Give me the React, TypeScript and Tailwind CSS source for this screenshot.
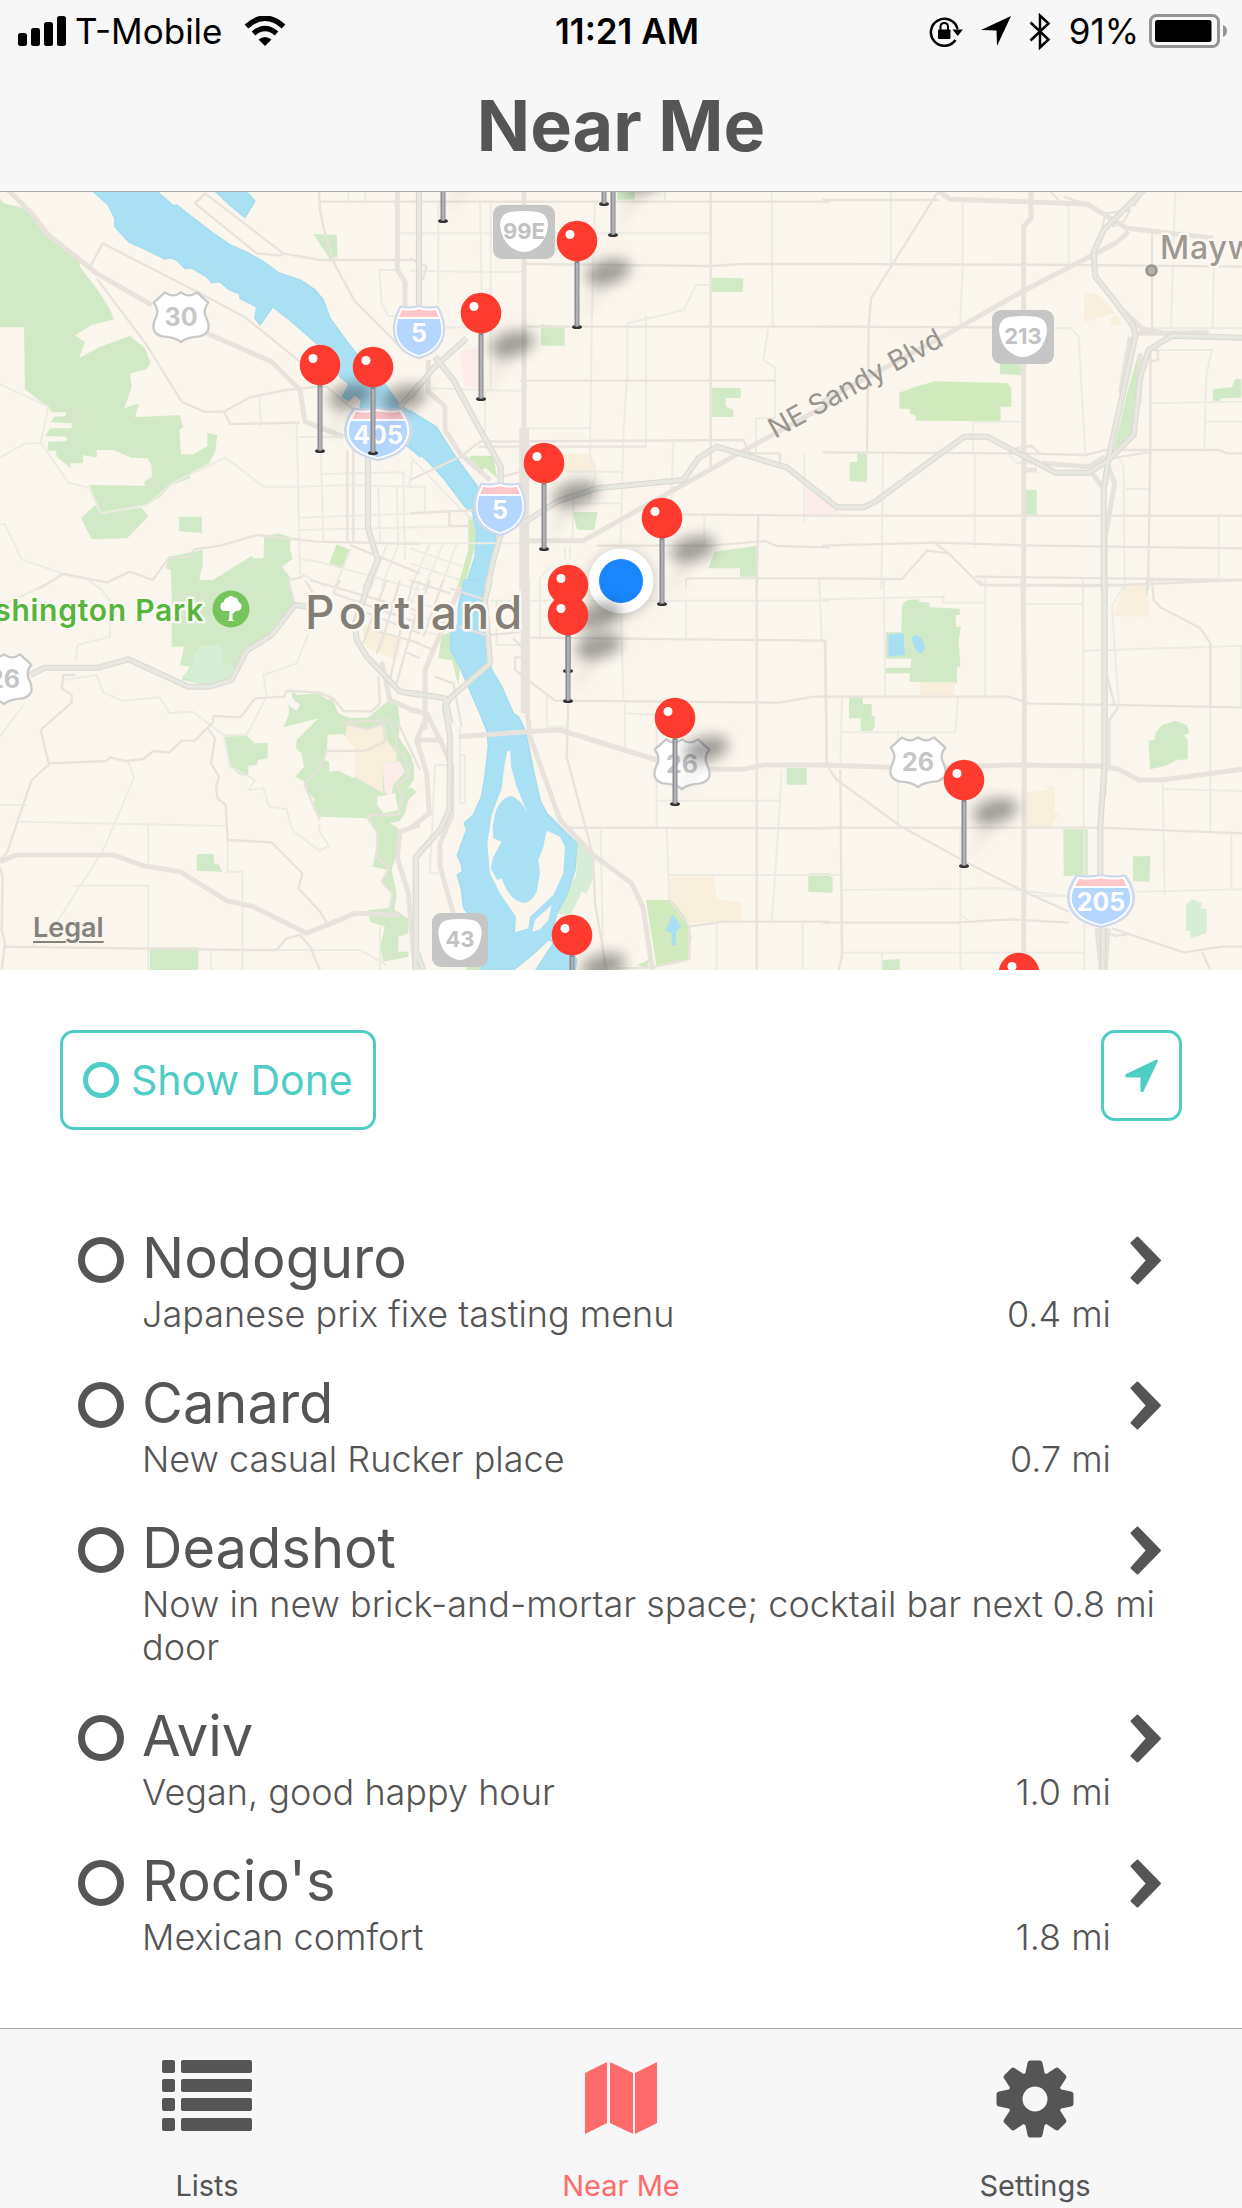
import React, { useState } from 'react';

interface Place {
  name: string;
  note: string;
  distance: string;
}

interface Sheet {
  x: number;
  y: number;
  parks: string;
  golf: string;
  paleParks: string;
  campus: string;
  hospital: string;
  water: string;
  land: string;
  ponds: string;
  lanes: string;
  streets: string;
  avenues: string;
  freeways: string;
}

const PLACES: Place[] = [
  { name: 'Nodoguro', note: 'Japanese prix fixe tasting menu', distance: '0.4 mi' },
  { name: 'Canard', note: 'New casual Rucker place', distance: '0.7 mi' },
  { name: 'Deadshot', note: 'Now in new brick-and-mortar space; cocktail bar next door', distance: '0.8 mi' },
  { name: 'Aviv', note: 'Vegan, good happy hour', distance: '1.0 mi' },
  { name: "Rocio's", note: 'Mexican comfort', distance: '1.8 mi' },
];

// Map geometry, split in six sheets. Each sheet uses units of a third of a map unit.
const SHEETS: Sheet[] = [
  {
    x: 0,
    y: 190,
    parks:
      'M0 25L10 40L75 55L120 105L150 145L232 192L240 230L300 310L325 350L343 388L275 405L225 436L255 457L237 505L300 470L390 438L435 475L452 518L440 538L390 550L395 590L385 620L373 655L417 640L405 682L540 675L549 712L538 720L543 793H580L622 768V728L652 735L645 785L628 820L570 850V865L515 885L480 920L440 945L303 970L290 940L268 885L438 887L432 875L455 860V828L443 805L395 803L340 780H290V803L250 795L248 820H212V835L170 800L168 782H142L145 755L200 753V740L135 738L150 715H215V700L152 697L163 680L198 678V667H155L143 650L75 598L72 412H0Z M243 985L285 945L303 970L425 953L445 978L382 1045L275 1048Z M537 980H606V1029L537 1024Z M497 1135L505 1100L608 1080V1125L595 1180L610 1187L755 1098L760 1105H790L793 1038L835 1030L872 1042L870 1075L878 1107L845 1130L870 1160V1200H515L512 1140Z M940 132L1010 135L1013 200L990 208Z',
    golf: 'M1010 1063L1052 1080L1030 1133L988 1120Z',
    paleParks: '',
    campus: '',
    hospital: '',
    water:
      'M275 0L325 45L345 85V110L388 157L430 175L495 207L510 203L530 210L555 235L575 233L620 260L635 277L660 275L685 297L720 312V325L770 350L765 385L780 404L818 350L870 390L950 460L1020 560L1048 582L1028 620L1045 632L1065 612L1085 632L1080 650L1260 800V690L1195 640L1160 590L1060 480L1030 440L990 385L970 330L945 300L900 270L835 248L790 215L740 187L690 165L640 130L570 77L530 45L520 48L465 0Z M642 0H735L764 33L735 82L690 45Z',
    land: '',
    ponds: '',
    lanes:
      'M0 803L75 760H122 M0 1003H15L65 1108L190 1152 M303 970L440 945L520 878L630 825L677 803L790 890H900L1030 885L1260 890 M778 620L783 710 M890 700L900 1150L980 1190 M893 741H1030 M962 760L970 1055 M1250 0V340 M1200 130H1250 M1210 240H1138L1145 340L1165 378H1200 M965 852L1210 847L1215 1110 M893 983L1260 970 M893 1020L1260 1012 M905 1108L955 1115L1100 1155L1260 1200 M1053 1075L1000 1200 M1135 885L1140 1060 M1190 885L1195 1060 M1238 810L1228 885 M1160 1065L1110 1200 M1195 1065L1145 1190 M1045 0V35 M1096 0V35 M0 583L145 650L122 758L205 878L268 893L303 970',
    streets:
      'M110 1200L190 1152L320 1177L390 1145L458 1170L507 1103L565 1102L585 1078L665 1066L770 1035L950 1055L1260 1062 M290 265L440 465L545 635L612 665H672L750 622L860 600L935 592L980 590L1085 680 M672 665L690 702L900 698 M268 235L308 160L600 310L735 382L900 515 M585 40L615 10L850 190L840 197L770 190Z M850 190L960 210H1260 M957 0L960 60L970 110L1000 215L1065 335L1200 470 M962 35H1250 M1042 780V1060 M1060 780V1060 M1050 1065L1260 1150 M870 1170L910 1160',
    avenues:
      'M25 0L95 70L140 130L290 250L455 345 M620 430L815 515L885 585L900 600L915 695L1030 740 M1192 0V240L1215 275V350',
    freeways: 'M1104 800V1015L1133 1110L1095 1200 M1260 580L1200 650',
  },
  {
    x: 410,
    y: 190,
    parks:
      'M905 263L1000 265L998 306H905Z M393 403L464 410V467H393Z M905 593L992 594V624H947V650L970 660V681H905Z M487 967L563 966L553 1020L502 1019Z M915 1085L1040 1067V1160H990V1135H895Z M622 0H674V28L622 30Z',
    golf: 'M170 820L182 797H250L262 865L225 832L210 850Z M175 975L190 985L200 1050L160 1200H140L175 1080Z',
    paleParks: '',
    campus: 'M460 792H540L563 835L555 845H460Z',
    hospital: 'M150 485L210 470V590H163Z M1188 890L1260 945V973H1188Z',
    water:
      'M0 765L60 820L105 870L150 930L165 950L188 965L200 1030L195 1100L163 1200H240L258 1035L235 940L195 880L140 805L80 712L0 662Z',
    land: '',
    ponds: '',
    lanes:
      'M85 35V340 M210 35L215 310 M242 35V600 M0 130H900 M555 35L545 410L540 800L558 850L535 935 M1085 0L1088 410 M0 242L340 247 M650 570L640 740L632 1060 M652 570V400L822 360L858 285H900 M708 375V770 M1075 415L1060 510L1095 533V685H1038V790 M85 415L250 405 M350 715H540 M60 595L335 603 M225 600V760 M470 845H635 M485 940H635 M790 755L783 975 M883 977V1060 M1183 790V1000 M0 890H45V965 M0 1010H115 M0 1060H340 M465 1070V1110 M480 1070V1110 M0 800L185 990 M828 1165V1200 M1228 1165V1200 M390 1200V1165L420 1130 M765 0V35 M0 1075L160 1130 M0 1120L150 1170 M60 1060L0 1200 M100 1060L40 1200 M140 1060L90 1200 M490 900L488 1060',
    streets:
      'M0 35H1260 M345 222L905 228L1000 222H1260 M902 0V840 M350 410H1260 M330 572H1095 M205 770H708 M145 805L210 755L1000 750 M800 973L1260 977 M1045 977L1040 1200 M560 1067H900L1065 1053L1100 1068L1260 1072 M830 1165H1260 M0 970L190 960 M118 965V1008H180 M0 870L140 805 M1000 750L1020 790H1110V830 M0 205L50 230L38 270 M280 860L350 840',
    avenues:
      'M342 0V1200 M335 715V1200 M350 715V1200 M330 1052H520L1050 755L1260 640 M55 510V605L105 650V720L150 790L240 870',
    freeways:
      'M27 0V345 M75 500L130 570L200 700L272 830V880 M0 620L75 530L170 445 M340 1000L440 935L560 895L820 870L865 805L920 770L1130 832L1260 935 M272 1035L250 1110L230 1200',
  },
  {
    x: 822,
    y: 190,
    parks:
      'M534 520H598V556L534 552Z M106 790H135V877L83 873V816H106Z M609 900H644V974H609Z M950 490L960 520L945 590L935 735L875 780L920 590Z M1173 597L1230 592L1240 567H1258V623L1195 625V634H1173Z',
    golf: 'M232 608L280 590L340 574L555 579L568 592V650H536V694L282 692L280 675L265 672L262 656H232Z',
    paleParks: '',
    campus: 'M788 308L830 315L880 370L785 397Z M865 385L885 375L900 405L868 410Z M905 1187H973V1200H903Z',
    hospital: 'M0 935L62 973H0Z',
    water: '',
    land: '',
    ponds: '',
    lanes:
      'M207 0V222 M422 38V222L415 400 M740 45V220 M1060 0L1047 412 M1175 235L1172 412 M697 415H745L770 440L790 795 M183 790L178 1200 M458 790V1075 M453 790V695H598 M985 640L1260 635 M1170 480L1153 555L1147 775 M985 480H1170 M1147 695H1260 M912 897H985 M890 805L905 830L908 1200 M1190 977V1165 M963 415H1260 M560 790L585 820H640 M490 1165V1200 M783 1165V1200',
    streets:
      'M0 30H350 M345 10L147 325L140 410L135 785 M0 222L760 225L1260 230 M0 410L510 412 M990 130V412 M0 787L600 790L790 795L850 780H1190L1215 790H1260 M0 977H1260 M0 1067L340 1058L600 1066L1260 1075 M0 1165L240 1167L315 1082L380 1090L475 1185H900 M340 1060L380 1090 M460 1160L1260 1170 M985 480V790L978 1200 M580 775L628 768L655 790 M725 20L800 45 M680 0L710 30 M840 120L850 70L925 60L905 95L870 110 M985 790V765 M870 805L990 785 M985 480H1008V510L985 515',
    avenues:
      'M345 0L385 28L600 35L795 42L915 115L1175 145 M627 0V85L605 110V1200 M0 635L380 430L600 305L880 160L920 125 M605 840H645 M945 430L1160 428 M880 340L960 415L1050 435 M925 440L895 610 M955 490L950 640 M855 820L878 880L850 1040V1200 M800 835L840 890 M660 820L800 830L850 800',
    freeways:
      'M965 0L845 120L815 185L820 260L880 335L935 410L940 440L905 600L860 800L845 900V1200 M1260 443L1050 437L980 480L955 560L935 735L855 815L800 848H700L600 795L495 740H428L350 795L160 935L125 952H45L0 915 M960 0L930 45',
  },
  {
    x: 0,
    y: 580,
    parks:
      'M515 0H865L880 50V80L800 170L740 215L690 300L620 315L545 300L570 260L540 255L552 200H515Z M672 470L740 467L765 490L803 488V535L775 540L770 555L745 557V587L720 585L690 560Z M875 328L890 345L960 340L980 358H998L1015 400L1050 415L1105 412L1165 362L1192 365L1200 430L1195 470L1235 530L1243 590L1225 625L1247 635L1225 660L1215 700L1200 723L1170 730L1195 745L1190 820L1175 870L1190 940L1183 990L1225 1015V1060L1195 1070V1115H1225V1130L1150 1145L1140 1100L1155 1040L1110 1025L1105 990L1165 985L1175 945L1145 905L1165 870L1118 860L1130 800V760L1100 715L960 710L940 690L943 655L925 640L915 605L885 590L912 560L905 520L888 505L890 480L955 415L850 442L868 400L865 375L890 392L900 375L877 355Z M590 822H642V850L655 852L667 875L590 872Z M450 1103L595 1102V1170H450Z',
    golf: '',
    paleParks: 'M545 290L575 265L580 220L610 195H665L670 245L707 262L690 300L600 312Z',
    campus:
      'M1040 435L1100 448L1155 432L1160 480L1190 520V545L1145 550L1150 640L1062 590V500L1035 475Z M1085 130L1205 180L1190 242L1100 200Z',
    hospital: 'M1145 550L1200 545L1215 575L1180 615L1175 645L1155 640Z',
    water: '',
    land: 'M983 465L1030 462L1062 500V595L1015 572L988 575V545L972 540L980 515Z M1132 650L1185 640L1195 690L1150 700L1132 675Z',
    ponds: '',
    lanes:
      'M0 470L70 375 M0 675H80 M60 725L680 738 M385 543L402 593L310 810L175 1020L95 1100 M445 735V850 M225 917H445V1170 M683 780V875H727V1170 M190 300L290 285L310 338L365 362L480 352L508 400L578 395L670 465H740L800 350L790 285L890 250L925 160 M672 470L690 560L765 600L745 630L790 625L808 680L860 688L877 750L958 812L988 798L958 755V730 M730 1110H1080L1160 1155 M633 1110V1170 M265 0L300 25L330 60V170L232 195L228 240 M0 80L165 0 M1140 1040V1170',
    streets:
      'M150 550L320 543L330 532L375 543L430 537L460 513L508 518L545 482H585L640 425V408L722 412L765 355L852 350L860 332L960 338L1000 355L1030 393L1115 394L1140 370L1135 290 M0 840L20 820L95 600L147 553L122 450L215 368V345L185 325L190 285H225 M620 440L645 475L633 550L657 590L648 620L653 655L677 675L683 780L815 787L907 880L895 925L960 995L985 1035 M912 612L958 570L980 513L1097 512L1155 485L1150 430L1100 448L1030 427L1170 420L1190 480L1185 512L1210 520L1227 590L1190 615L1207 650L1197 705H1103L1133 760L1130 830L1168 865L1145 905L1177 940L1170 1000 M10 1100L730 1110H830L860 1075L900 1065L930 1100L960 1170 M912 612L960 720 M1195 430L1260 570 M0 860L8 890L5 1050L15 1090L5 1170 M865 0L885 75 M915 0L940 40 M930 0L1260 95 M1000 40L1260 130 M1090 95L1260 160 M1120 150L1260 190 M1020 0L1000 40 M1160 0L1110 130L1090 190 M1200 0L1150 170L1130 220 M1240 0L1200 160L1170 300 M1260 60L1215 220L1190 310 M1215 215L1260 235',
    avenues:
      'M0 845L50 825H340L430 857L540 875L680 962L760 980L920 1060L1065 1000L1200 1005 M1260 735L1200 755L1192 835L1225 940L1245 1170 M1145 245L1170 360L1225 385L1260 395',
    freeways:
      'M90 285L135 263H295L385 238L565 320H630L695 300L740 212L815 165L885 75L920 80 M1110 0L1065 130L1070 180L1100 230L1200 335L1260 345 M1260 820L1247 835V1170',
  },
  {
    x: 410,
    y: 580,
    parks:
      'M95 165L125 155L122 210L150 260L145 315L125 240L85 235Z M1130 563H1190V614H1130Z M1195 880H1260V938L1195 935Z M0 530L12 555V600L0 615Z M0 620L20 635L0 655Z M680 1155L715 1140V1165Z M170 1160H215V1170H170Z',
    golf: 'M708 960H780L815 975L845 1070L833 1140L740 1160Z',
    paleParks: 'M495 765L550 830L552 890L530 940L515 935L480 1010L440 1000L500 880Z',
    campus: 'M780 890H912L920 960L995 965V1020L840 1030L778 950Z',
    hospital: '',
    water:
      'M163 0L145 80V130L122 160V210L150 260L175 320L210 400L232 455L235 500L225 590L215 650L190 705L163 730L170 750L155 790L142 825L155 855L157 875L142 885L155 930L160 980L180 1010V1100L215 1150V1170H310L360 1130L420 1075L430 1090L378 1170H495L500 1140L490 1120L420 1080L440 1000L470 945L495 870L500 790L455 745L410 700L390 660L370 570L350 470L340 440L325 410L310 400L275 320L245 270L225 200L228 60L240 0Z',
    land: 'M292 512L283 560L275 625L245 705L232 790L240 880L270 940L318 1010L315 1057L355 1045L360 1010L430 945L460 880L465 800L450 770L410 752L400 800L385 840L390 880L380 935Q360 975 335 968Q295 955 275 895L262 900L242 865L250 830L275 785L250 775L248 740L258 690Q275 655 300 648Q330 652 353 702L320 620L303 560L301 514Z M367 1055L375 1020L425 975L415 1020L390 1048Z',
    ponds: 'M790 1003L812 1040L798 1055V1095H785V1060L765 1050Z',
    lanes:
      'M240 62H415 M540 62H1260 M828 60V175 M1228 0L1235 180 M633 100L640 362 M645 370V510 M645 400L740 405V740 M740 662H1115 M1115 570L1105 745L1085 1030 M572 750L580 1170 M770 748L778 960 M778 885H1260 M920 1030V1170 M1178 1030V1170 M410 350V440H470 M390 0V180 M60 880V820 M75 555H110 M75 555L60 880H90 M0 60L110 95 M0 100L100 130 M0 140L80 165 M30 0L0 80 M260 60V195H345 M150 440V670H165V525H150',
    streets:
      'M0 0L120 40 M0 180L70 210 M60 0L0 160 M100 0L40 170 M240 165L345 155 M350 173L1245 182L1250 550 M150 140L240 170 M1040 0V1170 M340 232H315V270L435 362L1110 368L1210 350H1260 M475 370L470 530L550 830L555 970L590 1170 M480 743L1260 745 M778 960L838 1040V1140 M838 1040L940 1025H1260 M620 1165L720 1163L830 1140 M120 25L230 60 M75 290L130 310L155 440 M310 175L345 210',
    avenues:
      'M340 0V400 M352 0V400L360 470L450 720L550 825L665 910L700 985L727 1170 M145 470L350 455L450 450L740 540 M900 568H1000L1060 555H1260 M45 450V270L150 20 M0 390L50 400L100 500L125 560V710L90 790V860L130 1000 M20 480H100 M45 420L20 480L50 580L58 700L0 745',
    freeways:
      'M240 0L225 60L240 250L120 355L105 380L120 470L118 690L90 750L18 830V1110L40 1170 M0 338L105 355L122 430',
  },
  {
    x: 822,
    y: 580,
    parks:
      'M240 75Q250 55 290 58L292 65L322 68V82L413 86V105H400L403 140H417L410 180L415 260L405 263V310L262 305L268 236H192V157H238Z M192 263H268V280H192Z M81 353H123V372H149V408H158V440L150 453H116V415H81Z M980 482L997 480L1000 460L1020 435L1060 422L1095 435L1103 460L1085 465L1097 480V538L1065 540L1030 558L984 568Z M724 748H797V885L725 888Z M933 829H985L982 905L933 903Z M0 890L32 892V938L0 935Z M183 1140L233 1137V1170H183Z',
    golf: '',
    paleParks: 'M1092 975L1110 958L1142 970L1135 985L1154 988V1058L1105 1076V1053H1092Z',
    campus:
      'M905 15L975 12L982 110L875 108Z M613 637L675 630V618H697V695L713 700L688 740H613Z M297 307H397V346H293Z',
    hospital: '',
    water: '',
    land: '',
    ponds: 'M200 163L245 160L248 225L200 230Z M267 175L282 163L300 178L310 205L298 222L283 212Z',
    lanes:
      'M0 58L365 50V68H490 M490 0V348 M185 0L190 348 M613 72H780 M783 0L785 745 M785 212L1260 197 M1165 382V755 M60 457H400L408 350 M228 450V735 M415 740V1170 M60 930L545 925L730 948 M60 1118H785 M787 750V1170 M1022 605L1028 945 M1022 627L1260 633 M945 935L1260 928 M1228 755V930 M640 948H735 M905 15L870 80L890 375 M60 350L55 560 M415 1005L437 1020 M180 1118V1170 M0 885H55 M1258 200V380',
    streets:
      'M0 350H560L620 370L1260 382 M0 185H10L15 550 M0 743H830L1260 760 M20 565L45 600L235 738L430 845L600 932L740 995 M55 570L60 1130L50 1170 M0 1028H400L565 1018L740 1028 M870 1045L1085 1117L1200 1100H1260 M1140 1115L1165 1170 M975 0V45 M990 0L995 60L1015 82L1135 145L1165 190V380 M890 380L862 420V560 M850 270L878 375 M470 0L485 15L820 18L1260 0 M840 1050L880 1068L920 1062',
    avenues:
      'M603 0L607 330L605 1170 M0 555L205 562 M372 562L560 555L830 558L890 568L950 600H1020L1260 568 M850 0V560L845 650 M825 1045L838 1170 M858 1045L850 1170',
    freeways: 'M847 0V560L835 740V885 M843 1045V1170',
  },
];

const PINS = [
  { x: 604, y: 118 },
  { x: 443, y: 135 },
  { x: 613, y: 149 },
  { x: 577, y: 241 },
  { x: 481, y: 313 },
  { x: 320, y: 365 },
  { x: 373, y: 367 },
  { x: 544, y: 463 },
  { x: 662, y: 518 },
  { x: 568, y: 585 },
  { x: 568, y: 615 },
  { x: 675, y: 718 },
  { x: 964, y: 780 },
  { x: 572, y: 935 },
  { x: 1019, y: 973 },
];

function Layer({ name, fill, stroke, width }: { name: keyof Sheet; fill?: string; stroke?: string; width?: number }) {
  return (
    <g fill={fill || 'none'} stroke={stroke || 'none'} strokeWidth={width} strokeLinejoin="round">
      {SHEETS.map((sheet) => (
        <path
          key={`${sheet.x}-${sheet.y}`}
          d={String(sheet[name])}
          transform={`translate(${sheet.x} ${sheet.y}) scale(0.33333)`}
        />
      ))}
    </g>
  );
}

function Pin({ x, y }: { x: number; y: number }) {
  return (
    <g transform={`translate(${x} ${y})`}>
      <path d="M2 84L14 52L26 36L30 42L20 60Z" fill="#000" opacity="0.08" filter="url(#soft)" />
      <ellipse cx="31" cy="31" rx="23" ry="12" fill="#000" opacity="0.36" transform="rotate(-15 31 31)" filter="url(#soft)" />
      <ellipse cx="0" cy="86" rx="5" ry="2" fill="#333" />
      <rect x="-2.5" y="18" width="5" height="68" rx="2" fill="#8a8b90" />
      <rect x="-1" y="22" width="2.5" height="63" fill="#b0b1b5" />
      <circle r="20.3" fill="#ff3b30" />
      <circle cx="-7" cy="-6.5" r="4.5" fill="#fff" />
    </g>
  );
}

function ShieldText({ children, fill, size, y }: { children: string; fill: string; size: string; y: number }) {
  return (
    <text y={y} textAnchor="middle" fill={fill} className={`font-bold ${size}`}>
      {children}
    </text>
  );
}

function UsShield({ x, y, label }: { x: number; y: number; label: string }) {
  return (
    <g transform={`translate(${x} ${y})`}>
      <path
        d="M-48 -74Q-24 -56 0 -74Q24 -56 48 -74L82 -43Q62 -20 78 8Q94 48 56 58Q18 60 0 75Q-18 60 -56 58Q-94 48 -78 8Q-62 -20 -82 -43Z"
        transform="scale(0.33333)"
        fill="#fff"
        stroke="#c9c9c9"
        strokeWidth="7"
        strokeLinejoin="round"
      />
      <ShieldText fill="#c6c6c6" size="text-[25px]" y={9}>{label}</ShieldText>
    </g>
  );
}

function Interstate({ x, y, label, wide }: { x: number; y: number; label: string; wide?: boolean }) {
  const stretch = wide ? 0.43 : 0.33;
  return (
    <g transform={`translate(${x} ${y})`}>
      <g transform={`scale(${stretch} 0.33333)`} strokeLinejoin="round">
        <path
          d="M-56 -76Q-26 -70 0 -78Q26 -70 56 -76Q80 -34 75 4Q66 60 0 78Q-66 60 -75 4Q-80 -34 -56 -76Z"
          fill="#fff"
          stroke="#d0daec"
          strokeWidth="7"
        />
        <path d="M-51 -67Q-26 -61 0 -68Q26 -61 51 -67L60 -45H-60Z" fill="#ffc6ca" />
        <path d="M-63 -39H63Q70 -16 67 6Q56 54 0 70Q-56 54 -67 6Q-70 -16 -63 -39Z" fill="#b5d6ff" />
      </g>
      <ShieldText fill="#fff" size="text-[25px]" y={10}>{label}</ShieldText>
    </g>
  );
}

function StateRoute({ x, y, label, width = 62 }: { x: number; y: number; label: string; width?: number }) {
  return (
    <g transform={`translate(${x} ${y})`}>
      <rect x={-width / 2} y="-27" width={width} height="54" rx="9" fill="#c6c6c6" />
      <path
        d="M-14 -20Q0 -22 14 -20Q24 -18 24 -7Q22 12 8 18Q0 22 -8 18Q-22 12 -24 -7Q-24 -18 -14 -20Z"
        transform={`scale(${width / 62} 1)`}
        fill="#fff"
      />
      <ShieldText fill="#c2c2c2" size="text-[22px]" y={7}>{label}</ShieldText>
    </g>
  );
}

function PlaceMap() {
  return (
    <div className="relative overflow-hidden bg-[#faf5ed]">
      <svg
        viewBox="0 192 1242 778"
        preserveAspectRatio="xMidYMid slice"
        className="block h-[778px] w-full"
        role="img"
        aria-label="Map of saved places near Portland"
      >
        <defs>
          <filter id="soft" x="-80%" y="-150%" width="260%" height="400%">
            <feGaussianBlur stdDeviation="7" />
          </filter>
        </defs>

        <Layer name="parks" fill="#d2e9c7" />
        <Layer name="golf" fill="#d0eabd" />
        <Layer name="paleParks" fill="#d7edd5" />
        <Layer name="land" fill="#faf5ed" />
        <Layer name="campus" fill="#f7eedb" />
        <Layer name="hospital" fill="#fbece9" />
        <Layer name="water" fill="#aae0f4" stroke="#a5dcef" width={5} />
        <g transform="translate(410 580) scale(0.33333)" fill="#faf5ed">
          <path d={SHEETS[4].land} />
        </g>
        <Layer name="ponds" fill="#a8def1" />
        <Layer name="lanes" stroke="#ecebe3" width={6} />
        <Layer name="streets" stroke="#e7e3dc" width={7} />
        <Layer name="avenues" stroke="#e7e3dc" width={15} />
        <Layer name="freeways" stroke="#dcd9d2" width={18} />
        <Layer name="freeways" stroke="#e8e8e3" width={11} />

        {/* labels */}
        <g stroke="#fbf8f2" strokeWidth="5" strokeLinejoin="round" style={{ paintOrder: 'stroke' }}>
          <text x="305" y="629" fill="#837e76" className="text-[46px] font-medium tracking-widest">Portland</text>
          <text x="1160" y="259" fill="#9d9890" className="text-[32px] font-medium tracking-wide">Mayw</text>
          <text x="204" y="621" textAnchor="end" fill="#57b43c" className="text-[30px] font-semibold tracking-wide">shington Park</text>
        </g>
        <text transform="translate(775 439) rotate(-29)" fill="#98958f" className="text-[28px]">NE Sandy Blvd</text>
        <circle cx="1151.5" cy="270.5" r="5" fill="#b3b0aa" stroke="#98958e" strokeWidth="2.5" />
        <g transform="translate(231 609)">
          <circle r="18.5" fill="#77c35c" />
          <path d="M-2 11L-1.500 2H-6Q-11 2 -10.500 -3Q-10 -7 -7 -7Q-7 -11 -3 -11.500Q0 -15 3 -11.500Q7 -12 7.500 -7Q11 -6 10.500 -2Q10 2 5 2L1.500 5V11L4 12H-4Z" fill="#fff" />
        </g>

        {/* route shields */}
        <UsShield x={181} y={317} label="30" />
        <UsShield x={4} y={679} label="26" />
        <UsShield x={682} y={764} label="26" />
        <UsShield x={918} y={762} label="26" />
        <Interstate x={419} y={332} label="5" />
        <Interstate x={500} y={509} label="5" />
        <Interstate x={378} y={434} label="405" wide />
        <Interstate x={1101} y={901} label="205" wide />
        <StateRoute x={524} y={232} label="99E" />
        <StateRoute x={1023} y={337} label="213" />
        <StateRoute x={460} y={940} label="43" width={56} />

        {/* current location */}
        <circle cx="621" cy="583" r="33" fill="#000" opacity="0.2" filter="url(#soft)" />
        <circle cx="621" cy="581" r="32.500" fill="#fff" />
        <circle cx="621" cy="581" r="22" fill="#1a86fe" />

        {PINS.map((pin) => (
          <Pin key={`${pin.x}-${pin.y}`} x={pin.x} y={pin.y} />
        ))}
      </svg>
      <a href="#legal" className="absolute bottom-6 left-[33px] text-[27px] leading-9 font-semibold text-[#85827c] underline decoration-2 underline-offset-4">
        Legal
      </a>
    </div>
  );
}

function StatusBar() {
  return (
    <div className="grid h-[62px] grid-cols-3 items-center px-[15px] text-[35px] leading-[44px] text-black">
      <div className="flex items-center gap-[9px] pl-[3px]">
        <svg viewBox="0 0 48 30" className="h-[30px] w-12 shrink-0">
          <rect x="0" y="17" width="9" height="13" rx="2.500" />
          <rect x="13" y="12" width="9" height="18" rx="2.500" />
          <rect x="26" y="6" width="9" height="24" rx="2.500" />
          <rect x="39" y="0" width="9" height="30" rx="2.500" />
        </svg>
        <span>T-Mobile</span>
        <svg viewBox="0 0 42 30" className="ml-3 h-[30px] w-[42px] shrink-0">
          <path d="M2.500 10.500Q21 -6 39.500 10.500" fill="none" stroke="#000" strokeWidth="5.500" />
          <path d="M9.500 17.500Q21 7.500 32.500 17.500" fill="none" stroke="#000" strokeWidth="5.500" />
          <path d="M14.500 23.500Q21 18.500 27.500 23.500L21 30Z" />
        </svg>
      </div>
      <div className="pl-3 text-center font-semibold">11:21 AM</div>
      <div className="flex items-center justify-end">
        <svg viewBox="0 0 34 32" className="h-8 w-[34px] shrink-0">
          <path d="M26.500 25A13.500 13.500 0 1 1 28.500 14" fill="none" stroke="#000" strokeWidth="2.500" />
          <path d="M23.500 14.500H34L28.700 21Z" />
          <rect x="9" y="14.500" width="12.500" height="9.500" rx="1" />
          <path d="M11.500 15V12Q11.500 8 15.200 8Q19 8 19 12V15" fill="none" stroke="#000" strokeWidth="2" />
        </svg>
        <svg viewBox="0 0 30 30" className="ml-[18px] h-[30px] w-[30px] shrink-0">
          <path d="M30 0L16 30L15.500 14.500L0 14Z" />
        </svg>
        <svg viewBox="0 0 22 37" className="ml-[18px] h-[37px] w-[22px] shrink-0">
          <path d="M1.500 9.500L19.500 26.500L11 34.500V2.500L19.500 10.500L1.500 27.500" fill="none" stroke="#000" strokeWidth="2.500" />
        </svg>
        <span className="ml-[18px]">91%</span>
        <svg viewBox="0 0 78 34" className="ml-[10px] h-[34px] w-[78px] shrink-0">
          <rect x="1.500" y="1.500" width="68" height="31" rx="6" fill="none" stroke="#949494" strokeWidth="3" />
          <rect x="6" y="6" width="56.500" height="22" rx="2.500" />
          <path d="M74 11Q78 12.500 78 17Q78 21.500 74 23Z" fill="#949494" />
        </svg>
      </div>
    </div>
  );
}

function PlaceRow({ place }: { place: Place }) {
  const id = `done-${place.name.replace(/\W/g, '').toLowerCase()}`;
  return (
    <li className="flex gap-[18px]">
      <input
        id={id}
        type="checkbox"
        className="mt-[14px] h-[46px] w-[46px] shrink-0 appearance-none rounded-full border-[7px] border-[#555]"
      />
      <div className="min-w-0 flex-1">
        <div className="flex items-center justify-between">
          <label htmlFor={id} className="text-[56px] leading-[70px]">{place.name}</label>
          <button type="button" aria-label={`Open ${place.name}`} className="mt-1">
            <svg viewBox="0 0 32 49" className="h-[49px] w-8">
              <path
                d="M1.500 7L7.500 1.500L30 24.500L7.500 47.500L1.500 42L17 24.500Z"
                fill="#555"
                stroke="#555"
                strokeWidth="2"
                strokeLinejoin="round"
              />
            </svg>
          </button>
        </div>
        <div className="flex justify-end pr-[7px] text-[36px] leading-[43px] font-light">
          <p className="grow">{place.note}</p>
          <span className="shrink-0 whitespace-nowrap">{place.distance}</span>
          <span className="w-11 shrink-[9999]" />
        </div>
      </div>
    </li>
  );
}

function ListIcon() {
  return (
    <svg viewBox="0 0 90 71" className="h-[71px] w-[90px]" fill="currentColor">
      {[0, 19, 38, 58].map((y) => (
        <g key={y}>
          <rect x="0" y={y} width="13" height="13" rx="2" />
          <rect x="19" y={y} width="71" height="13" rx="2" />
        </g>
      ))}
    </svg>
  );
}

function MapIcon() {
  return (
    <svg viewBox="0 0 72 74" className="h-[74px] w-[72px]" fill="currentColor">
      <path d="M0 13L22 2V63L0 74Z M25 2L48 13V74L25 63Z M50 13L72 2V63L50 74Z" />
    </svg>
  );
}

function GearIcon() {
  return (
    <svg viewBox="-39 -39 78 78" className="h-[78px] w-[78px]" fill="currentColor">
      <circle r="20" fill="none" stroke="currentColor" strokeWidth="15" />
      {[0, 45, 90, 135, 180, 225, 270, 315].map((angle) => (
        <path
          key={angle}
          d="M-10 -24L-7.500 -36Q-7 -38.500 -5 -38.500H5Q7 -38.500 7.500 -36L10 -24Z"
          transform={`rotate(${angle})`}
        />
      ))}
    </svg>
  );
}

const TABS = [
  { label: 'Lists', icon: <ListIcon />, active: false },
  { label: 'Near Me', icon: <MapIcon />, active: true },
  { label: 'Settings', icon: <GearIcon />, active: false },
];

export default function App() {
  const [showDone, setShowDone] = useState(false);

  return (
    <div className="flex min-h-screen flex-col bg-white font-['Inter','Liberation_Sans',sans-serif] text-[#555]">
      <header className="border-b border-[#a9a9a9] bg-[#f7f7f7]">
        <StatusBar />
        <h1 className="pt-5 pb-[21px] text-center text-[70px] leading-[88px] font-bold">Near Me</h1>
      </header>

      <PlaceMap />

      <main className="px-[60px] pt-[60px]">
        <div className="flex items-start justify-between text-[#4ecdc4]">
          <button
            type="button"
            aria-pressed={showDone}
            onClick={() => setShowDone(!showDone)}
            className="flex h-[100px] items-center gap-3 rounded-[14px] border-[3px] border-[#4ecdc4] px-5 text-[41px] leading-[50px]"
          >
            <span className="h-9 w-9 rounded-full border-[5px] border-[#4ecdc4]" />
            Show Done
          </button>
          <button
            type="button"
            aria-label="Center map on my location"
            className="flex h-[91px] w-[81px] items-center justify-center rounded-[14px] border-[3px] border-[#4ecdc4]"
          >
            <svg viewBox="0 0 34 34" className="h-[34px] w-[34px]">
              <path
                d="M1.500 16L32 1.500L17.500 32H16.500V17.500H1.500Z"
                fill="#4ecdc4"
                stroke="#4ecdc4"
                strokeWidth="2"
                strokeLinejoin="round"
              />
            </svg>
          </button>
        </div>

        <ul className="mt-[93px] flex flex-col gap-8 pr-5 pl-[18px]">
          {PLACES.map((place) => (
            <PlaceRow key={place.name} place={place} />
          ))}
        </ul>
      </main>

      <nav className="mt-auto grid h-[180px] grid-cols-3 border-t border-[#a9a9a9] bg-[#f7f7f7]">
        {TABS.map((tab) => (
          <a
            key={tab.label}
            href="#tab"
            aria-current={tab.active ? 'page' : undefined}
            className={`flex flex-col items-center pt-[31px] text-[29px] leading-9 ${tab.active ? 'text-[#ff6b6b]' : 'text-[#555]'}`}
          >
            <span className="flex h-[78px] items-start">{tab.icon}</span>
            <span className="mt-[30px]">{tab.label}</span>
          </a>
        ))}
      </nav>
    </div>
  );
}
